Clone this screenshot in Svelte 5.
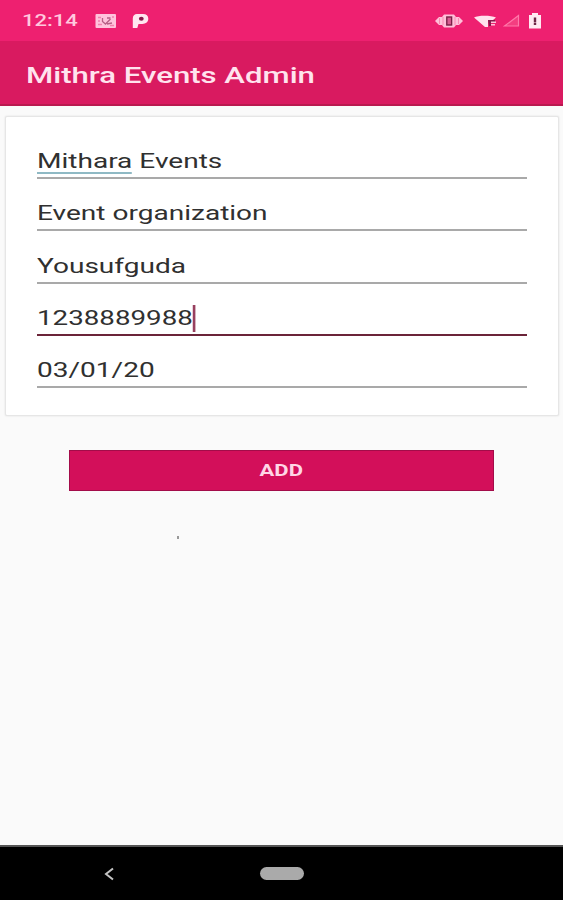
<script lang="ts">
  interface Field {
    id: string;
    value: string;
    suggestion?: string;
    focused?: boolean;
  }

  const fields: Field[] = [
    { id: 'name', suggestion: 'Mithara', value: ' Events' },
    { id: 'type', value: 'Event organization' },
    { id: 'location', value: 'Yousufguda' },
    { id: 'phone', value: '1238889988', focused: true },
    { id: 'date', value: '03/01/20' }
  ];
</script>

<div class="screen">
  <div class="status-bar">
    <span class="clock"><span class="wide">12:14</span></span>
    <svg class="cast" width="22" height="16" viewBox="0 0 22 16">
      <rect x="0.5" y="1" width="20.5" height="14" rx="1" fill="#ffc3dc" />
      <path d="M3 4.500h3M3 8h2M3 11.500h4M15 12.500h4M17 4h2" stroke="#f280ae" stroke-width="1.300" />
      <path d="M7.500 5v3.500l3 2.500 5-5M12 5h3.500M12 11l5-1" stroke="#b65f85" stroke-width="1.300" fill="none" />
    </svg>
    <svg class="parking" width="18" height="16" viewBox="0 0 18 16">
      <path d="M5 1h6c3.500 0 5.300 2 5.300 4.800s-2.300 5.200-6 5.200H6.500L5.300 15H.8V5.500C.8 2.500 2.500 1 5 1z" fill="#ffe6f0" />
      <ellipse cx="9.300" cy="5.800" rx="2.400" ry="2" fill="#8a174b" />
    </svg>
    <div class="spacer"></div>
    <svg class="vibrate" width="28" height="16" viewBox="0 0 28 16">
      <path d="M0 8l4-4h3l2-2.500h10L21 4h3l4 4-4 4h-3l-2 2.500H9L7 12H4z" fill="#ffc0d9" />
      <path d="M4.500 5v6M8 4v8M20 4v8M23.500 5v6" stroke="#f685af" stroke-width="0.900" />
      <rect x="11.800" y="4" width="4.800" height="8" fill="#d95b90" stroke="#7a2148" stroke-width="1.400" />
    </svg>
    <svg class="wifi" width="24" height="14" viewBox="0 0 24 14">
      <path d="M0 3.500C4 1 17 1 22 3.500L19 6h-5v7L11 13z" fill="#ffe1ed" />
      <path d="M14 6h7v2h-4v4h-2z" fill="#841d4d" />
      <path d="M17 8.300h5M17 10.800h4" stroke="#ffc0d9" stroke-width="1.500" />
    </svg>
    <svg class="signal" width="17" height="13" viewBox="0 0 17 13">
      <path d="M1.500 12L15.500 1.500V12z" fill="#f43d80" stroke="#ff79aa" stroke-width="1.200" />
    </svg>
    <svg class="battery" width="14" height="16" viewBox="0 0 14 16">
      <path d="M4 0h6v2h3v13.500H1V2h3z" fill="#ffe9f2" />
      <path d="M7 4.500V9M7 9.500V12" stroke="#6e2546" stroke-width="2.400" />
    </svg>
  </div>

  <header class="app-bar">
    <h1 class="wide">Mithra Events Admin</h1>
  </header>

  <main>
    <section class="card">
      {#each fields as field (field.id)}
        <div class="field" class:focused={field.focused}>
          <span class="value wide">{#if field.suggestion}<span class="suggestion">{field.suggestion}</span>{/if}{field.value}</span>
        </div>
      {/each}
    </section>

    <button class="add-btn"><span class="wide">ADD</span></button>
    <div class="speck"></div>
  </main>

  <nav class="nav-bar">
    <svg class="back" width="12" height="14" viewBox="0 0 12 14">
      <path d="M10 1.500L3 7l7 5.500" fill="none" stroke="#c4c4c4" stroke-width="2" />
    </svg>
    <div class="home-pill"></div>
  </nav>
</div>

<style>
  :global(body) {
    margin: 0;
  }

  .screen {
    display: flex;
    flex-direction: column;
    height: 900px;
    background: #fafafa;
    font-family: Roboto, 'Liberation Sans', sans-serif;
    overflow: hidden;
  }

  .wide {
    display: inline-block;
    transform: scaleX(1.335);
    transform-origin: left center;
    white-space: pre;
  }

  .status-bar {
    display: flex;
    align-items: center;
    box-sizing: border-box;
    height: 41px;
    padding: 0 21px 0 22px;
    background: #ee2070;
  }

  .clock {
    width: 73px;
    font-size: 16.500px;
    font-weight: 500;
    line-height: 20px;
    color: #ffc9de;
  }

  .parking {
    margin-left: 15px;
  }

  .spacer {
    flex: 1;
  }

  .wifi {
    margin-left: 11px;
  }

  .signal {
    margin-left: 5px;
  }

  .battery {
    margin-left: 8px;
  }

  .app-bar {
    display: flex;
    align-items: center;
    box-sizing: border-box;
    height: 65px;
    padding: 6px 26px 0;
    border-bottom: 2px solid #b9194f;
    background: #d91a60;
  }

  h1 {
    margin: 0;
    font-size: 22px;
    font-weight: 500;
    line-height: 28px;
    color: #ffe3ee;
  }

  h1.wide {
    transform: scaleX(1.415);
  }

  main {
    display: flex;
    flex: 1;
    flex-direction: column;
    padding: 10px 4px 0 5px;
  }

  .card {
    box-sizing: border-box;
    height: 300px;
    padding: 10px 31px 0;
    border: 1px solid #e6e6e6;
    border-radius: 2px;
    background: #fff;
    box-shadow: 0 0 2px #dcdcdc;
  }

  .field {
    display: flex;
    align-items: flex-end;
    box-sizing: border-box;
    height: 52.200px;
    padding-bottom: 2px;
    border-bottom: 2px solid #a9a9a9;
  }

  .value {
    font-size: 21px;
    line-height: 27px;
    color: #303030;
  }

  .suggestion {
    display: inline-block;
    height: 24px;
    line-height: 27px;
    border-bottom: 2px solid #8fb9c4;
  }

  .focused {
    border-bottom-color: #6b2439;
  }

  .focused .value {
    border-right: 2px solid #98405f;
    transform: scaleX(1.32);
  }

  .add-btn {
    height: 41px;
    margin: 34px 65px 0 64px;
    padding: 0;
    border: 1px solid #a30c49;
    background: #d30f5a;
    color: #ffd6e6;
    font-family: inherit;
    font-size: 16.500px;
    font-weight: 700;
    line-height: 20px;
  }

  .add-btn .wide {
    transform-origin: center;
  }

  .speck {
    width: 2px;
    height: 3px;
    margin: 45px 0 0 172px;
    background: #999;
  }

  .nav-bar {
    display: flex;
    align-items: center;
    box-sizing: border-box;
    height: 55px;
    padding-left: 103px;
    border-top: 2px solid #555;
    background: #000;
  }

  .home-pill {
    width: 44px;
    height: 13px;
    margin-left: 145px;
    border-radius: 7px;
    background: #aaa;
  }
</style>
